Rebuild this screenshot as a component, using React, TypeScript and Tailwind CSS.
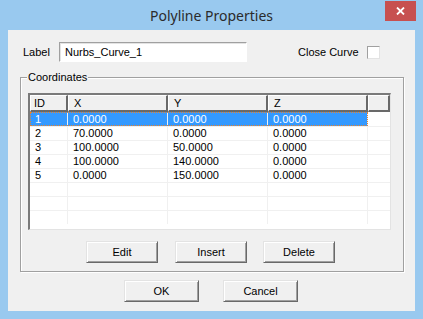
const rows = [
  ['1', '0.0000', '0.0000', '0.0000'],
  ['2', '70.0000', '0.0000', '0.0000'],
  ['3', '100.0000', '50.0000', '0.0000'],
  ['4', '100.0000', '140.0000', '0.0000'],
  ['5', '0.0000', '150.0000', '0.0000'],
  ['', '', '', ''],
  ['', '', '', ''],
  ['', '', '', ''],
];

const cols = [
  { label: 'ID', w: 'w-[38px]', pad: 'pl-[3px]' },
  { label: 'X', w: 'w-[100px]', pad: 'pl-[5px]' },
  { label: 'Y', w: 'w-[100px]', pad: 'pl-[5px]' },
  { label: 'Z', w: 'w-[100px]', pad: 'pl-[5px]' },
];

function Btn({ label, className = '' }: { label: string; className?: string }) {
  return (
    <div
      className={`flex h-[22px] items-center justify-center border-t border-l border-[#e3e3e3] border-r border-b border-r-[#696969] border-b-[#696969] bg-[#f0f0f0] shadow-[inset_1px_1px_0_#ffffff,inset_-1px_-1px_0_#a0a0a0] ${className}`}
    >
      {label}
    </div>
  );
}

export default function App() {
  return (
    <div className="flex h-[319px] w-[423px] flex-col bg-[#99c9ef] font-['Liberation_Sans',Arial,sans-serif] text-[11px] text-black">
      {/* title bar */}
      <div className="relative flex h-[30px] shrink-0 items-center justify-center">
        <span className="font-['Noto_Sans',sans-serif] text-[14px] text-[#2b2b2b]">Polyline Properties</span>
        <div className="absolute right-[7px] top-[1px] flex h-[20px] w-[31px] items-center justify-center bg-[#c75050]">
          <svg width="9" height="8" viewBox="0 0 9 8">
            <path d="M1 0.5 L8 7.5 M8 0.5 L1 7.5" stroke="#fff" strokeWidth="1.8" />
          </svg>
        </div>
      </div>

      {/* client */}
      <div className="mx-[8px] mb-[8px] flex flex-1 flex-col bg-[#f0f0f0]">
        <div className="mt-[12px] flex h-[20px] items-center">
          <span className="ml-[15px] w-[36px]">Label</span>
          <div className="flex h-[20px] w-[188px] items-center border-t border-l border-[#a0a0a0] border-r border-b border-r-white border-b-white bg-white pl-[5px] shadow-[inset_1px_1px_0_#e3e3e3]">
            Nurbs_Curve_1
          </div>
          <span className="ml-[51px]">Close Curve</span>
          <div className="ml-[8px] h-[13px] w-[13px] border-t border-l border-[#a0a0a0] border-r border-b border-r-[#e3e3e3] border-b-[#e3e3e3] bg-white" />
        </div>

        {/* group box */}
        <div className="relative ml-[12px] mt-[15px] h-[195px] w-[384px] border border-[#a0a0a0] shadow-[inset_1px_1px_0_#ffffff,1px_1px_0_#ffffff]">
          <span className="absolute left-[6px] top-[-7px] bg-[#f0f0f0] px-[1px] leading-[13px]">Coordinates</span>

          {/* list view */}
          <div className="ml-[7px] mt-[15px] flex h-[137px] w-[363px] flex-col overflow-hidden border-t-2 border-l-2 border-[#7a7a7a] border-r border-b border-r-[#e3e3e3] border-b-[#e3e3e3] bg-white">
            <div className="flex h-[17px] shrink-0 bg-[#f0f0f0]">
              {cols.map((c) => (
                <div
                  key={c.label}
                  className={`flex items-center border-t border-l border-white border-r-2 border-b-2 border-r-[#696969] border-b-[#696969] ${c.w} ${c.pad}`}
                >
                  {c.label}
                </div>
              ))}
              <div className="w-[22px] border-t border-l border-white border-r-2 border-b-2 border-r-[#696969] border-b-[#696969]" />
            </div>
            {rows.map((r, i) => (
              <div key={i} className="flex h-[14px] shrink-0">
                <div
                  className={`flex ${i === 0 ? 'bg-[#3399ff] text-white outline-1 outline-dotted outline-[#e8822b] -outline-offset-1' : 'border-t border-[#f0f0f0]'}`}
                >
                  {r.map((v, j) => (
                    <div
                      key={j}
                      className={`flex items-center border-r border-[#f0f0f0] leading-[13px] ${cols[j].w} ${j === 0 ? 'pl-[5px]' : 'pl-[5px]'}`}
                    >
                      {v}
                    </div>
                  ))}
                </div>
                <div className={`w-[22px] ${i === 0 ? '' : 'border-t border-[#f0f0f0]'}`} />
              </div>
            ))}
          </div>

          <div className="mt-[11px] flex">
            <Btn label="Edit" className="ml-[65px] w-[72px]" />
            <Btn label="Insert" className="ml-[17px] w-[72px]" />
            <Btn label="Delete" className="ml-[16px] w-[72px]" />
          </div>
        </div>

        <div className="mt-[8px] flex">
          <Btn label="OK" className="ml-[116px] w-[75px]" />
          <Btn label="Cancel" className="ml-[24px] w-[75px]" />
        </div>
      </div>
    </div>
  );
}
